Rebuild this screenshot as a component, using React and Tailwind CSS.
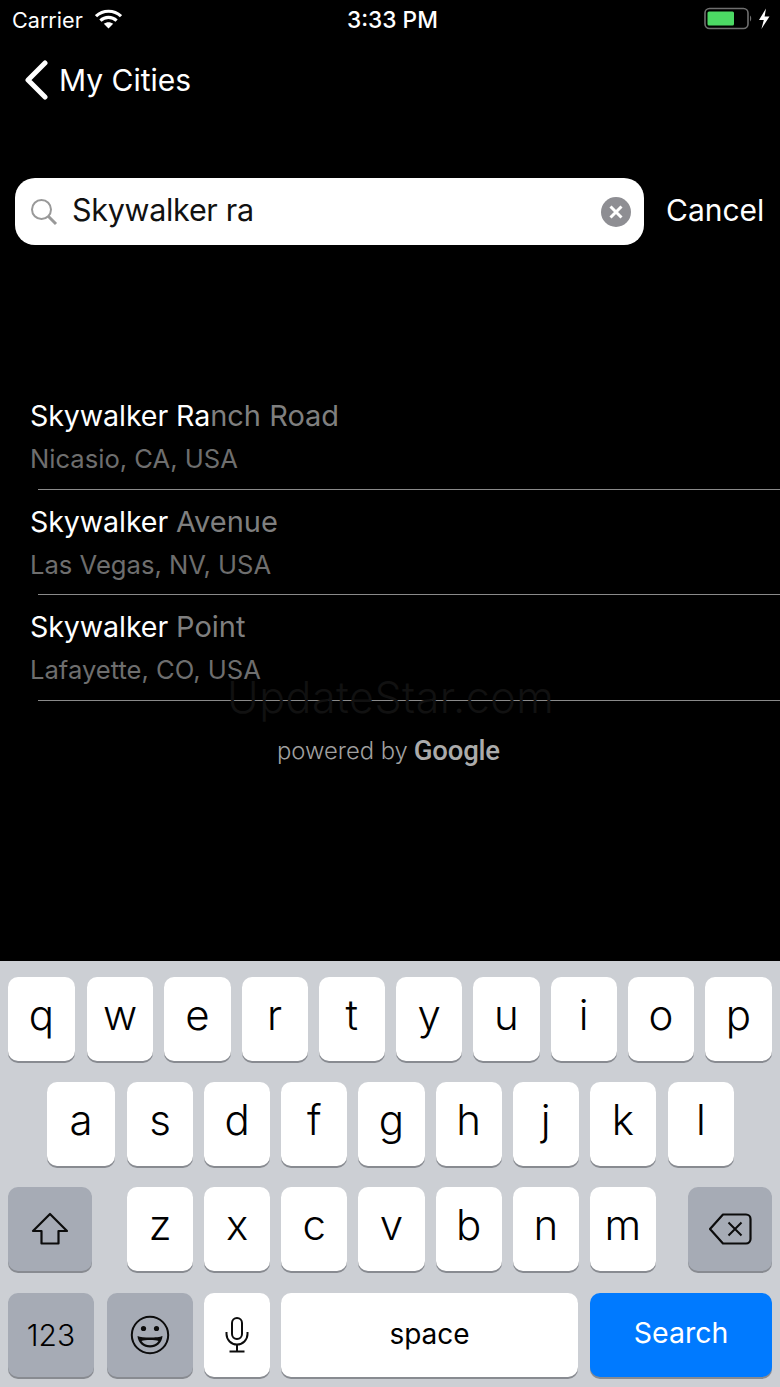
import React from "react";

const sans = "font-['Inter','Liberation_Sans',sans-serif]";

function Wifi() {
  return (
    <svg width="27" height="20" viewBox="0 0 27 20" className="ml-[12px] mb-[3px]" fill="none">
      <path d="M1 7.2C8 0.6 19 0.6 26 7.2" stroke="white" strokeWidth="3.2" />
      <path d="M5.4 11.6C10 7.4 17 7.4 21.6 11.6" stroke="white" strokeWidth="3.2" />
      <path d="M13.5 19.5L8.8 14.8C11.4 12.6 15.6 12.6 18.2 14.8Z" fill="white" />
    </svg>
  );
}

function Battery() {
  return (
    <svg width="68" height="24" viewBox="0 0 68 24" fill="none">
      <rect x="1" y="1.5" width="43" height="20" rx="4.5" stroke="#6f6f6f" strokeWidth="1.6" />
      <rect x="3.5" y="4.5" width="26.5" height="14" rx="1.5" fill="#4cd964" />
      <path d="M46 8.5C47.6 9.2 47.6 13.8 46 14.5Z" fill="#6f6f6f" />
      <path d="M62 1.5L55 13H59.8L57.4 22L65.5 9.5H60.6Z" fill="white" />
    </svg>
  );
}

function Key({ children, className = "" }) {
  return (
    <div className={`${className} h-[84px] rounded-[10px] bg-white shadow-[0_2px_0_#888b91] flex items-center justify-center text-black`}>
      {children}
    </div>
  );
}

function Letter({ c, className = "flex-1" }) {
  return (
    <Key className={className}>
      <span className="text-[42px] leading-none font-light pb-[8px]">{c}</span>
    </Key>
  );
}

function Row({ strong, rest, sub }) {
  return (
    <div className="ml-[30px] h-[105.5px] flex flex-col">
      <div className="text-[29px] leading-[34px] mt-[15px] h-[34px] text-[#7f7f7f] whitespace-nowrap">
        <span className="text-white text-[28.6px] tracking-[-0.1px]">{strong}</span>
        {rest}
      </div>
      <div className="text-[25.6px] leading-[30px] mt-[11px] text-[#6e6e6e] whitespace-nowrap">{sub}</div>
      <div className="ml-[8px] mt-auto h-px bg-[#8a8a8a]" />
    </div>
  );
}

export default function App() {
  const row1 = "wertyuio".split("");
  const row2 = "sdfghjk".split("");
  const row3 = "zxcvbnm".split("");
  return (
    <div className={`${sans} relative w-[780px] h-[1387px] bg-black flex flex-col overflow-hidden`}>
      <div className="h-[40px] px-[12px] flex items-center relative text-white">
        <span className="text-[21.6px] font-normal">Carrier</span>
        <Wifi />
        <span className="absolute left-[347px] top-[7px] text-[22.7px] leading-[26px] font-medium whitespace-nowrap">3:33 PM</span>
        <div className="ml-auto -mr-[4px] mt-[-2px]">
          <Battery />
        </div>
      </div>

      <div className="mt-[10px] h-[60px] flex items-center pl-[24px] text-white">
        <svg width="24" height="40" viewBox="0 0 24 40" fill="none">
          <path d="M21 3L4 20L21 37" stroke="white" strokeWidth="5" strokeLinecap="round" strokeLinejoin="round" />
        </svg>
        <span className="ml-[11px] text-[30px] leading-none">My Cities</span>
      </div>

      <div className="mt-[68px] ml-[15px] flex items-center">
        <div className="w-[629px] h-[67px] bg-white rounded-[20px] flex items-center pl-[15px] pr-[13px]">
          <svg width="28" height="28" viewBox="0 0 28 28" fill="none">
            <circle cx="11.5" cy="11.5" r="9.5" stroke="#999" strokeWidth="2" />
            <path d="M18.5 18.5L26 26" stroke="#999" strokeWidth="3" />
          </svg>
          <span className="ml-[14px] pb-[3px] text-[30.5px] leading-none tracking-[-0.3px] text-[#111] whitespace-nowrap">Skywalker ra</span>
          <div className="ml-auto w-[30px] h-[30px] rounded-full bg-[#8e8e93] flex items-center justify-center">
            <svg width="16" height="16" viewBox="0 0 16 16" fill="none">
              <path d="M2.5 2.5L13.5 13.5M13.5 2.5L2.5 13.5" stroke="white" strokeWidth="3" />
            </svg>
          </div>
        </div>
        <span className="ml-[22px] pb-[3px] text-[30px] leading-none text-white">Cancel</span>
      </div>

      <div className="mt-[139px]">
        <Row strong="Skywalker Ra" rest="nch Road" sub="Nicasio, CA, USA" />
        <Row strong="Skywalker " rest="Avenue" sub="Las Vegas, NV, USA" />
        <Row strong="Skywalker " rest="Point" sub="Lafayette, CO, USA" />
      </div>

      <div className="mt-[35px] ml-[277px] flex items-center h-[30px] text-[#a0a0a0] whitespace-nowrap">
        <span className="text-[23.8px] font-light leading-none">powered by</span>
        <span className="ml-[6px] text-[27.5px] leading-none font-medium font-['Roboto',sans-serif] tracking-[-0.2px] text-[#ababab]">Google</span>
      </div>

      <div className="absolute left-[227px] top-[670px] text-[43px] leading-[54px] text-[#111111] whitespace-nowrap font-light tracking-[0.5px]">
        UpdateStar.com
      </div>

      <div className="mt-auto h-[426px] bg-[#cccfd4] pt-[16px] px-[8px] flex flex-col gap-[21px]">
        <div className="flex gap-[11px]">
          <Letter c="q" className="w-[67px] mr-[1px]" />
          {row1.map((c) => (
            <Letter key={c} c={c} />
          ))}
          <Letter c="p" className="w-[67px]" />
        </div>
        <div className="flex gap-[11px] pl-[39px] pr-[38px]">
          <Letter c="a" className="w-[68px] mr-[1px]" />
          {row2.map((c) => (
            <Letter key={c} c={c} />
          ))}
          <Letter c="l" className="w-[66px] ml-[1px]" />
        </div>
        <div className="flex">
          <Key className="w-[84px] !bg-[#a6abb5]">
            <svg width="38" height="34" viewBox="0 0 38 34" fill="none">
              <path d="M19 2L36 19H27.5V31.5H10.5V19H2Z" stroke="#0c0c0c" strokeWidth="2.2" strokeLinejoin="round" />
            </svg>
          </Key>
          <div className="flex gap-[11px] w-[529px] ml-[35px]">
            {row3.map((c) => (
              <Letter key={c} c={c} />
            ))}
          </div>
          <Key className="w-[84px] ml-[32px] !bg-[#a6abb5]">
            <svg width="44" height="32" viewBox="0 0 44 32" fill="none">
              <path d="M15 1.5H38A4.5 4.5 0 0 1 42.5 6V26A4.5 4.5 0 0 1 38 30.5H15L2 16Z" stroke="#0c0c0c" strokeWidth="2.2" strokeLinejoin="round" />
              <path d="M20.5 9.5L33.5 22.5M33.5 9.5L20.5 22.5" stroke="#0c0c0c" strokeWidth="2" />
            </svg>
          </Key>
        </div>
        <div className="flex gap-[11px] mt-[1px]">
          <Key className="w-[86px] mr-[2px] !bg-[#a6abb5]">
            <span className="text-[30px] leading-none font-light">123</span>
          </Key>
          <Key className="w-[86px] !bg-[#a6abb5]">
            <svg width="40" height="40" viewBox="0 0 40 40" fill="none">
              <circle cx="20" cy="20" r="18.2" stroke="#0c0c0c" strokeWidth="2" />
              <circle cx="13.5" cy="13.5" r="2.6" fill="#0c0c0c" />
              <circle cx="26.5" cy="13.5" r="2.6" fill="#0c0c0c" />
              <path d="M7.5 21C12 23 28 23 32.5 21C32 28 26.5 32.5 20 32.5C13.5 32.5 8 28 7.5 21Z" fill="#0c0c0c" />
              <path d="M11.5 26C15 24.8 25 24.8 28.5 26C26.5 29 23.5 30.3 20 30.3C16.5 30.3 13.5 29 11.5 26Z" fill="#a6abb5" />
            </svg>
          </Key>
          <Key className="w-[66px]">
            <svg width="24" height="36" viewBox="0 0 24 36" fill="none">
              <rect x="7" y="1" width="10" height="21" rx="5" stroke="#0c0c0c" strokeWidth="2" />
              <path d="M1.5 15V17A10.5 10.5 0 0 0 22.5 17V15M12 27.5V34M4.5 34.5H19.5" stroke="#0c0c0c" strokeWidth="2" />
            </svg>
          </Key>
          <Key className="w-[297px]">
            <span className="text-[28px] leading-none pb-[3px]">space</span>
          </Key>
          <Key className="w-[182px] ml-[1px] !bg-[#007aff] !text-white">
            <span className="text-[28.5px] leading-none pb-[3px]">Search</span>
          </Key>
        </div>
      </div>
    </div>
  );
}
